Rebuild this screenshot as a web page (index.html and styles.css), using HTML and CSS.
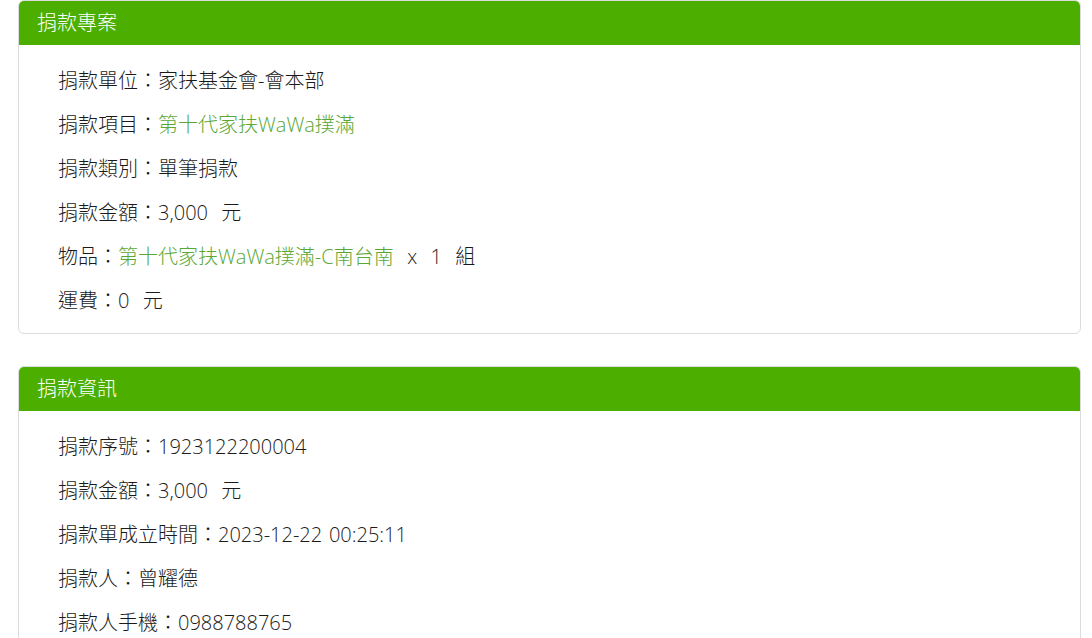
FILE: index.html
```html
<!DOCTYPE html>
<html lang="zh-Hant">
<head>
<meta charset="utf-8">
<title>捐款明細</title>
<link rel="stylesheet" href="styles.css">
</head>
<body>
<div class="page">
  <section class="panel">
    <div class="panel-head">捐款專案</div>
    <div class="panel-body">
      <p class="row">捐款單位：家扶基金會-會本部</p>
      <p class="row">捐款項目：<span class="hl">第十代家扶WaWa撲滿</span></p>
      <p class="row">捐款類別：單筆捐款</p>
      <p class="row">捐款金額：3,000&nbsp;&nbsp;元</p>
      <p class="row">物品：<span class="hl">第十代家扶WaWa撲滿-C南台南</span>&nbsp;&nbsp;x&nbsp;&nbsp;1&nbsp;&nbsp;組</p>
      <p class="row">運費：0&nbsp;&nbsp;元</p>
    </div>
  </section>
  <section class="panel">
    <div class="panel-head">捐款資訊</div>
    <div class="panel-body">
      <p class="row">捐款序號：1923122200004</p>
      <p class="row">捐款金額：3,000&nbsp;&nbsp;元</p>
      <p class="row">捐款單成立時間：2023-12-22 00:25:11</p>
      <p class="row">捐款人：曾耀德</p>
      <p class="row">捐款人手機：0988788765</p>
    </div>
  </section>
</div>
</body>
</html>
```

FILE: styles.css
```css
html, body {
  margin: 0;
  padding: 0;
  background: #ffffff;
}
body {
  font-family: "Open Sans", "Noto Sans CJK TC", "Noto Sans", sans-serif;
  color: #1a1a1a;
}
.page {
  padding: 0 11px 0 18px;
  display: flex;
  flex-direction: column;
  gap: 32px;
}
.panel {
  border: 1px solid #dcdcdc;
  border-radius: 6px;
  overflow: hidden;
  background: #ffffff;
}
.panel-head {
  background: #4caf00;
  color: #ffffff;
  height: 45px;
  line-height: 45px;
  padding: 0 19px;
  font-size: 20px;
  font-weight: 300;
  margin: -1px -1px 0 -1px;
}
.panel-body {
  padding: 14px 39px 10px;
}
.row {
  margin: 0;
  font-size: 20px;
  font-weight: 300;
  line-height: 44px;
  white-space: nowrap;
  word-spacing: 1.5px;
}
.hl {
  color: #5aa732;
}
```
